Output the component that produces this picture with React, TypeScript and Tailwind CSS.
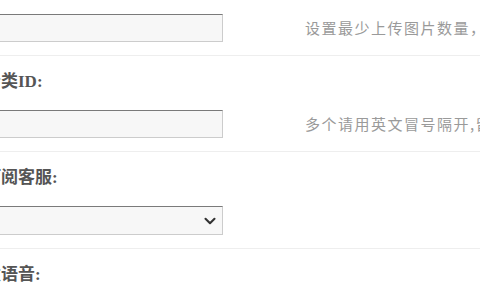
import { ChevronDown } from 'lucide-react';

type Row = {
  label: string;
  kind: 'input' | 'select';
  help?: string;
};

const rows: Row[] = [
  { label: '上传图片数:', kind: 'input', help: '设置最少上传图片数量，0为不限制' },
  { label: '分类ID:', kind: 'input', help: '多个请用英文冒号隔开,留空为全部分类' },
  { label: '订阅客服:', kind: 'select' },
  { label: '发语音:', kind: 'input' },
];

function Field({ row }: { row: Row }) {
  return (
    <div className="pt-[14px] pb-[13px] border-b border-[#eeeeee]">
      <label
        className="block h-[24px] leading-[24px] text-[17px] font-bold text-[#555] whitespace-nowrap"
        style={{ fontFamily: '"Liberation Serif", "Noto Sans CJK SC", serif' }}
      >
        {row.label}
      </label>
      <div className="flex items-center mt-[16px]">
        {row.kind === 'input' ? (
          <input
            type="text"
            className="shrink-0 w-[239px] h-[28px] bg-[#f7f7f7] border border-[#cccccc] border-t-[#7a7a7a] border-l-[#7a7a7a] outline-none"
          />
        ) : (
          <div className="relative shrink-0 w-[239px] h-[29px] bg-[#f7f7f7] border border-[#cccccc] border-t-[#7a7a7a] border-l-[#7a7a7a]">
            <ChevronDown
              className="absolute right-[3px] top-[5px] text-[#333]"
              size={18}
              strokeWidth={2.8}
            />
          </div>
        )}
        {row.help && (
          <span
            className="ml-[82px] text-[15px] tracking-[1.5px] text-[#9a9a9a] whitespace-nowrap"
            style={{ fontFamily: '"Noto Sans CJK SC", sans-serif' }}
          >
            {row.help}
          </span>
        )}
      </div>
    </div>
  );
}

export default function App() {
  return (
    <div className="w-[480px] h-[300px] overflow-hidden bg-white">
      <div className="-ml-[16px] -mt-[40px] w-[900px]">
        {rows.map((r) => (
          <Field key={r.label} row={r} />
        ))}
      </div>
    </div>
  );
}
